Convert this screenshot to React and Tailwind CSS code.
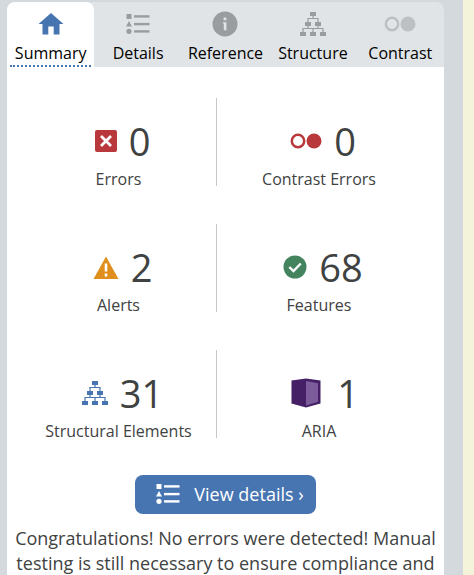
import React from "react";

function HomeIcon() {
  return (
    <svg width="26" height="22" viewBox="0 0 26 22" fill="#4775b2" aria-hidden="true">
      <path d="M13 0 L25.500 11 H21.500 V21.500 H15.700 V13.500 H10.300 V21.500 H4.500 V11 H0.500 Z" />
    </svg>
  );
}

function ListIcon() {
  return (
    <svg width="24" height="20" viewBox="0 0 24 20" fill="currentColor" aria-hidden="true">
      <rect x="0.500" y="0" width="5" height="5" />
      <path d="M3 7 L6 12.500 H0 Z" />
      <circle cx="3" cy="17.300" r="2.600" />
      <rect x="8" y="1.200" width="15.500" height="2.400" />
      <rect x="8" y="8.900" width="15.500" height="2.400" />
      <rect x="8" y="16.200" width="15.500" height="2.400" />
    </svg>
  );
}

function InfoIcon() {
  return (
    <svg width="26" height="26" viewBox="0 0 26 26" aria-hidden="true">
      <circle cx="13" cy="13" r="12.500" fill="#9a9d9f" />
      <g fill="#e0e4e7">
        <rect x="11.600" y="6.500" width="2.800" height="2.800" />
        <path d="M11 11.200 H14.400 V19.200 H11.800 V12.500 H11 Z" />
      </g>
    </svg>
  );
}

function TreeIcon() {
  return (
    <svg width="26" height="24" viewBox="0 0 26 24" fill="currentColor" aria-hidden="true">
      <rect x="10" y="0" width="6" height="4" />
      <rect x="5" y="10" width="6" height="4" />
      <rect x="15" y="10" width="6" height="4" />
      <rect x="0" y="20" width="6" height="4" />
      <rect x="10" y="20" width="6" height="4" />
      <rect x="20" y="20" width="6" height="4" />
      <path
        d="M13 4 V6.500 M8 10 V6.500 H18 V10 M8 14 V16.500 M18 14 V16.500 M3 20 V16.500 H23 V20 M13 16.500 V20"
        fill="none"
        stroke="currentColor"
        strokeWidth="1.200"
      />
    </svg>
  );
}

function ContrastIcon() {
  return (
    <svg width="32" height="16" viewBox="0 0 32 16" aria-hidden="true">
      <circle cx="8" cy="8" r="6.200" fill="none" stroke="currentColor" strokeWidth="2.500" />
      <circle cx="24" cy="8" r="7.500" fill="currentColor" />
    </svg>
  );
}

function ErrorIcon() {
  return (
    <svg width="22" height="22" viewBox="0 0 22 22" aria-hidden="true">
      <rect width="22" height="22" rx="2" fill="#b9383b" />
      <path d="M6 6 L16 16 M16 6 L6 16" stroke="#fff" strokeWidth="2.800" />
    </svg>
  );
}

function AlertIcon() {
  return (
    <svg width="26" height="23" viewBox="0 0 26 23" aria-hidden="true">
      <path d="M13 0.500 L25.500 23 H0.500 Z" fill="#e08f1c" />
      <path d="M13 7.500 V15.500 M13 17.500 V20.500" stroke="#fff" strokeWidth="2.600" />
    </svg>
  );
}

function FeatureIcon() {
  return (
    <svg width="24" height="24" viewBox="0 0 24 24" aria-hidden="true">
      <circle cx="12" cy="12" r="11.500" fill="#43845f" />
      <path d="M6.300 12 L10.500 16 L17.800 8.500" fill="none" stroke="#fff" strokeWidth="2.400" />
    </svg>
  );
}

function AriaIcon() {
  return (
    <svg width="30" height="30" viewBox="0 0 30 30" aria-hidden="true">
      <path d="M0.500 2.500 L15 0.500 L29.500 2.500 V25.500 L15 29.500 L0.500 25.500 Z" fill="#462066" />
      <path d="M15 3 L27 5.200 V23.700 L15 27.500 Z" fill="#7d5c9c" />
    </svg>
  );
}

const tabs = [
  { label: "Summary", icon: <HomeIcon />, active: true },
  { label: "Details", icon: <ListIcon /> },
  { label: "Reference", icon: <InfoIcon /> },
  { label: "Structure", icon: <TreeIcon /> },
  { label: "Contrast", icon: <span className="text-[#bcc0c2]"><ContrastIcon /></span> },
];

const stats = [
  { label: "Errors", value: 0, icon: <ErrorIcon /> },
  { label: "Contrast Errors", value: 0, icon: <span className="text-[#b9383b]"><ContrastIcon /></span> },
  { label: "Alerts", value: 2, icon: <AlertIcon /> },
  { label: "Features", value: 68, icon: <FeatureIcon /> },
  { label: "Structural Elements", value: 31, icon: <span className="text-[#4775b2]"><TreeIcon /></span> },
  { label: "ARIA", value: 1, icon: <AriaIcon />, wide: true },
];

function Tab({ label, icon, active }) {
  return (
    <button
      type="button"
      role="tab"
      aria-selected={Boolean(active)}
      className={`flex h-[65px] min-w-0 flex-col items-center text-black ${
        active ? "rounded-t-lg bg-white px-[3px]" : ""
      }`}
    >
      <span className="flex h-10 items-center justify-center pt-1 text-[#9a9d9f] [&_svg]:block">{icon}</span>
      <span
        className={`flex w-full flex-1 justify-center whitespace-nowrap text-base leading-[22px] ${
          active ? "border-b-2 border-dotted border-[#4775b2]" : ""
        }`}
      >
        {label}
      </span>
    </button>
  );
}

function Stat({ label, value, icon, divided, wide }) {
  return (
    <div className={`h-[88px] pt-[18px] text-center ${divided ? "border-r border-[#c5c7c9]" : ""}`}>
      <div className={`flex h-[50px] items-center justify-center ${wide ? "gap-4 pl-3" : "gap-3 pl-2"}`}>
        <span className="[&_svg]:block">{icon}</span>
        <span className="text-[38px] leading-[50px]">{value}</span>
      </div>
      <div className="mt-0.5 whitespace-nowrap text-base leading-[22px]">{label}</div>
    </div>
  );
}

export default function App() {
  return (
    <div className="flex h-screen overflow-hidden bg-[#f3f4d9] font-['Open_Sans','Noto_Sans',sans-serif] text-[#404242]">
      <aside className="mr-[11px] flex flex-1 flex-col bg-[#d3d9dd] pl-[7px] pr-[19px] pt-0.5">
        <div role="tablist" className="grid grid-cols-5 rounded-t-lg bg-[#e0e4e7]">
          {tabs.map((tab) => (
            <Tab key={tab.label} {...tab} />
          ))}
        </div>
        <main className="flex-1 bg-white">
          <div className="grid grid-cols-2 gap-x-1 gap-y-[38px] pl-3.5 pr-[27px] pt-[31px]">
            {stats.map((stat, i) => (
              <Stat key={stat.label} {...stat} divided={i % 2 === 0} />
            ))}
          </div>
          <div className="mt-[37px] flex justify-center">
            <button
              type="button"
              className="flex h-[39px] items-center gap-3.5 rounded-lg bg-[#4775b2] pl-[21px] pr-3 pb-0.5 text-lg text-white"
            >
              <ListIcon />
              <span>View details ›</span>
            </button>
          </div>
          <p className="mt-3 px-2 text-center text-lg leading-[25px]">
            Congratulations! No errors were detected! Manual testing is still necessary to ensure compliance and
          </p>
        </main>
      </aside>
    </div>
  );
}
